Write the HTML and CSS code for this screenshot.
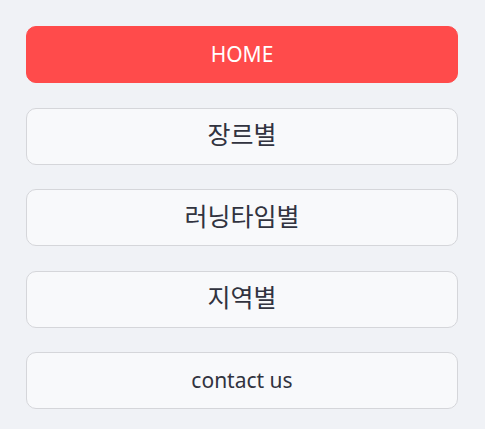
FILE: index.html
```html
<!DOCTYPE html>
<html lang="ko">
<head>
<meta charset="utf-8">
<link rel="stylesheet" href="styles.css">
</head>
<body>
<nav class="menu">
  <a class="item active">HOME</a>
  <a class="item ko">장르별</a>
  <a class="item ko">러닝타임별</a>
  <a class="item ko">지역별</a>
  <a class="item">contact us</a>
</nav>
</body>
</html>
```
FILE: styles.css
```css
html, body {
  margin: 0;
  padding: 0;
  background: #f0f2f6;
}
body {
  font-family: "Noto Sans", "Noto Sans CJK KR", sans-serif;
  color: #31333f;
}
.menu {
  display: flex;
  flex-direction: column;
  gap: 24.5px;
  padding: 26px 27px 0 26px;
}
.item {
  box-sizing: border-box;
  height: 57px;
  display: flex;
  align-items: center;
  justify-content: center;
  border: 1px solid #d5d6da;
  border-radius: 10px;
  background: #f8f9fb;
  font-size: 21px;
  line-height: 1;
}
.item.ko {
  font-family: "Noto Sans CJK KR", sans-serif;
  font-size: 25px;
  padding-bottom: 5px;
}
.item.active {
  background: #ff4b4b;
  border-color: #ff4b4b;
  color: #ffffff;
}
```
